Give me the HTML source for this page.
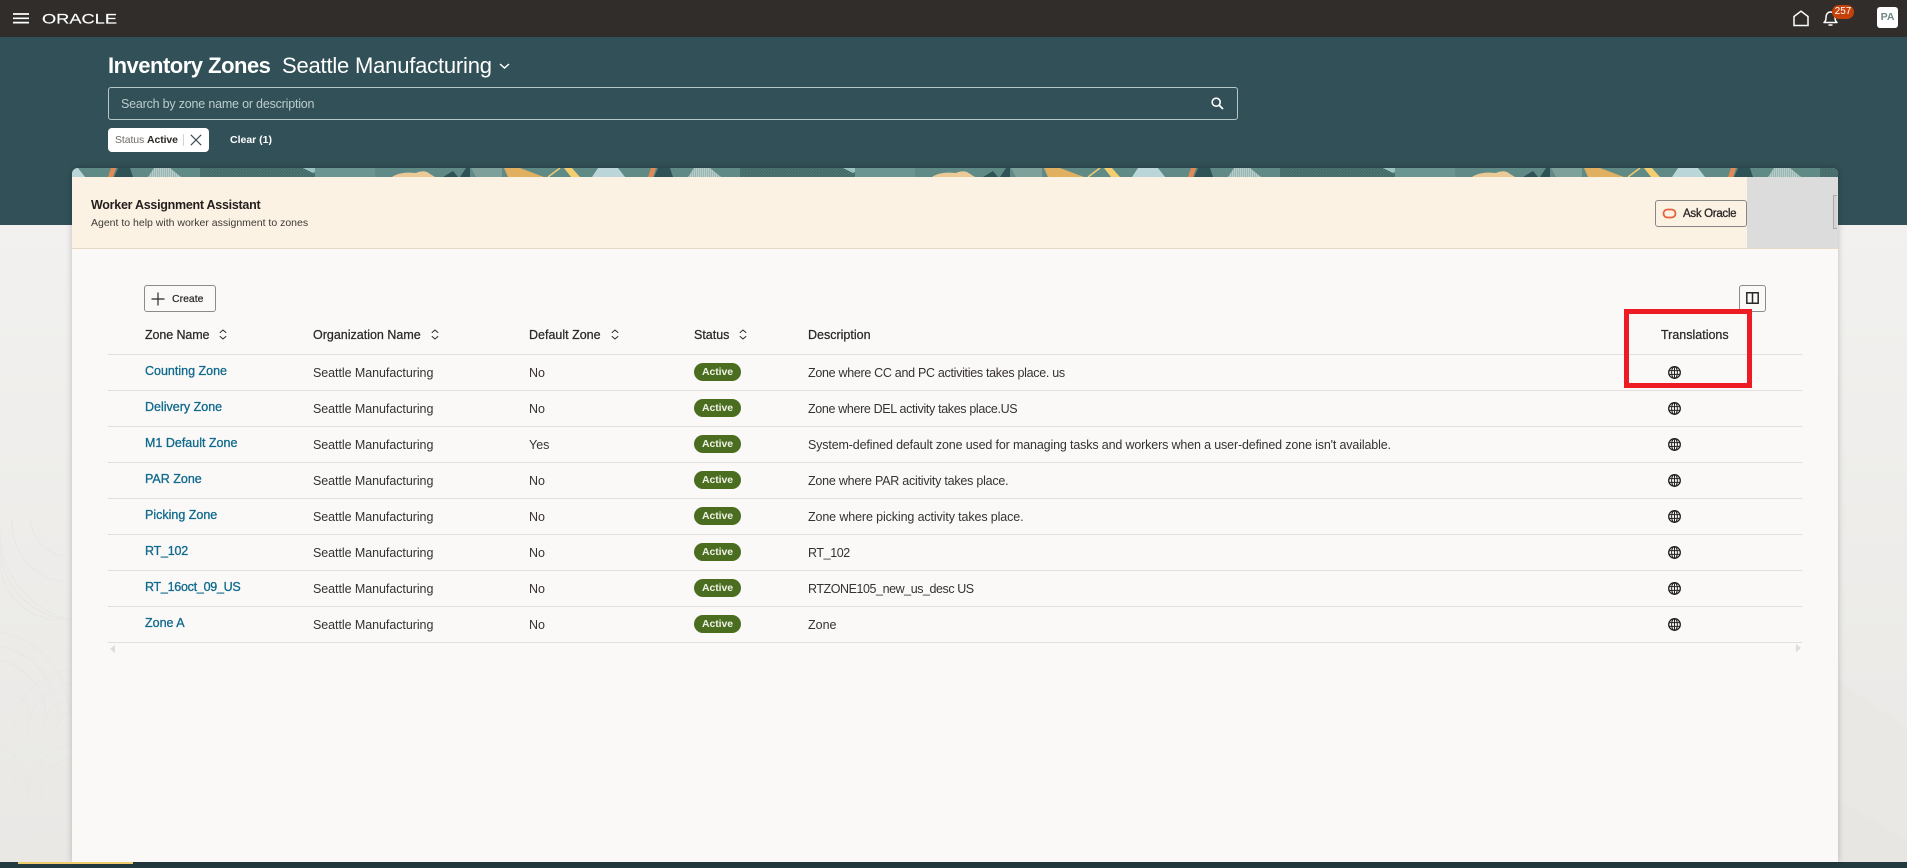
<!DOCTYPE html>
<html lang="en"><head><meta charset="utf-8"><title>Inventory Zones</title>
<style>
html,body{margin:0;padding:0;width:1907px;height:868px;overflow:hidden;background:#f1f0ee;font-family:"Liberation Sans",sans-serif;color:#2b2826}
.a{position:absolute;white-space:nowrap}
svg{position:absolute;display:block;overflow:hidden}
.h{font-size:12.5px;font-weight:400;color:#2b2826;line-height:16px;top:327px;-webkit-text-stroke:.25px #2b2826}
.l{font-size:12.5px;color:#0f6a8c;line-height:16px;-webkit-text-stroke:.3px #0f6a8c;left:145px}
.t{font-size:12.5px;color:#36322f;line-height:16px}
.o{left:313px;letter-spacing:-.06px}
.n{left:529px}
.d{left:808px}
.b{left:694px;width:47px;height:18px;border-radius:9px;background:#4a6d1f;color:#eef2e6;font-size:10.5px;font-weight:700;line-height:18px;text-align:center;letter-spacing:-.1px}
.ln{left:108px;width:1694px;height:1px;background:#e0dfdd}
.g{left:1667.5px}
</style></head><body>

<div class="a" style="left:0;top:0;width:1907px;height:37px;background:#312d2a"></div>
<div class="a" style="left:0;top:37px;width:1907px;height:188px;background:#325057"></div>
<div class="a" style="left:0;top:225px;width:1907px;height:637px;background:linear-gradient(#f2f1ef,#e9e8e5)"></div>
<div class="a" style="left:0;top:862px;width:1907px;height:6px;background:#233a40"></div>

<!-- body pattern left -->
<svg style="left:0;top:520px" width="72" height="320" viewBox="0 0 72 320" fill="none" stroke="#e8e7e4" stroke-width="1.1">
<path d="M0 40a60 60 0 0 0 60 60M0 24a76 76 0 0 0 72 76M0 10a90 90 0 0 0 72 90M12 0a60 60 0 0 0 52 62M30 0a40 40 0 0 0 36 36"/>
<path d="M0 140a60 60 0 0 1 46 58M0 126a72 72 0 0 1 58 72M0 112a86 86 0 0 1 70 86M0 170a30 30 0 0 1 30 28"/>
<path d="M72 150a62 62 0 0 0-58 62M72 164a48 48 0 0 0-44 48M72 178a34 34 0 0 0-30 34M72 192a20 20 0 0 0-16 20"/>
<path d="M0 225a50 50 0 0 1 28 50M0 238a38 38 0 0 1 16 36M72 225a50 50 0 0 0-42 60M72 238a38 38 0 0 0-30 46M72 252a24 24 0 0 0-18 30M30 292a60 60 0 0 0 42 28M14 292a72 72 0 0 0 58 24"/>
</svg>
<svg style="left:1838px;top:680px" width="69" height="182" viewBox="0 0 69 182"><path d="M0 0L69 48V182H0Z" fill="#e9e8e5"/><path d="M0 120L69 160V182H0Z" fill="#e7e6e3"/></svg>

<!-- card -->
<div class="a" style="left:72px;top:168px;width:1766px;height:694px;background:#fbf9f8;border-radius:6px 6px 0 0;box-shadow:0 0 7px rgba(0,0,0,.22)"></div>

<!-- pattern strip -->
<svg style="left:72px;top:168px" width="1766" height="9" viewBox="0 0 1766 9">
<defs>
<clipPath id="cp"><path d="M0 9V6a6 6 0 0 1 6-6H1760a6 6 0 0 1 6 6V9Z"/></clipPath>
<pattern id="st" width="2" height="2" patternUnits="userSpaceOnUse"><rect width="1" height="2" fill="#d0dedb"/></pattern>
<pattern id="fp" width="3" height="3" patternUnits="userSpaceOnUse"><path d="M0 3L3 0" stroke="#355b5b" stroke-width=".9"/></pattern>
<pattern id="tile" x="36" y="0" width="540" height="9" patternUnits="userSpaceOnUse">
<rect width="540" height="9" fill="#5f8a85"/>
<path d="M3 0H8L5 9H0Z" fill="#e38a54"/>
<path d="M10 0H22L25 9H6Z" fill="#2f5257"/>
<path d="M46 0H62L73 9H40Z" fill="#97b6b2"/><path d="M46 0H62L73 9H40Z" fill="url(#st)" opacity=".6"/>
<rect x="92" width="115" height="9" fill="#4f7672"/><rect x="92" width="115" height="9" fill="url(#fp)" opacity=".7"/>
<path d="M195 0H214L205 5Z" fill="#9cc2c3"/>
<rect x="207" width="60" height="9" fill="#6b9591"/>
<path d="M284 9C290 5 298 4 308 5C312 3 316 3 319 4L327 9Z" fill="#ecca97"/>
<path d="M335 9L345 3L350 9Z" fill="#2f5257"/>
<path d="M352 9L358 0H362V9Z" fill="#2f5257"/>
<path d="M363 0H394V9H368Z" fill="#7ea09b"/>
<path d="M396 0H412L436 9H400Z" fill="#e0b060"/>
<path d="M440 9L452 0" stroke="#f3cd6e" stroke-width="1.5"/><path d="M456 0H464L472 9H463Z" fill="#f3cd6e"/>
<path d="M490 0H510L517 9H484Z" fill="#bad6d8"/>
</pattern>
</defs>
<rect width="1766" height="9" fill="url(#tile)" clip-path="url(#cp)"/>
</svg>

<!-- banner -->
<div class="a" style="left:72px;top:177px;width:1675px;height:71px;background:#fcf2e4"></div>
<div class="a" style="left:1747px;top:177px;width:91px;height:71px;background:#dcdcdc"></div>
<div class="a" style="left:72px;top:248px;width:1766px;height:1px;background:#e8d8c8"></div>
<div class="a" style="left:1833px;top:195px;width:3px;height:32px;border:1px solid #aaa;border-right:0;background:#d4d4d4"></div>
<div class="a" style="left:91px;top:197px;font-size:12.5px;font-weight:700;line-height:16px;color:#231f1c;letter-spacing:-.27px">Worker Assignment Assistant</div>
<div class="a" style="left:91px;top:216px;font-size:10.5px;line-height:14px;color:#3c3835">Agent to help with worker assignment to zones</div>
<div class="a" style="left:1655px;top:200px;width:90px;height:25px;border:1px solid #8a8886;border-radius:3px"></div>
<svg style="left:1662px;top:208px" width="15" height="11"><rect x="1.5" y="1.5" width="12" height="8" rx="4" fill="none" stroke="#e8603c" stroke-width="1.8"/></svg>
<div class="a" style="left:1683px;top:206px;font-size:11.5px;line-height:16px;color:#2b2826;-webkit-text-stroke:.3px #2b2826;letter-spacing:-.3px">Ask Oracle</div>

<!-- top bar -->
<svg style="left:13px;top:13px" width="16" height="11"><path d="M0 1H16M0 5.3H16M0 9.6H16" stroke="#fff" stroke-width="1.7"/></svg>
<svg style="left:42px;top:12px" width="76" height="13" viewBox="0 0 76 13"><text x="0" y="11.3" font-family="Liberation Sans,sans-serif" font-size="13.5" fill="#fff" stroke="#fff" stroke-width=".15" textLength="75" lengthAdjust="spacingAndGlyphs">ORACLE</text></svg>
<svg style="left:1792px;top:10px" width="18" height="17"><path d="M2 15.5V6.5L9 1.2L16 6.5V15.5Z" fill="none" stroke="#fff" stroke-width="1.5"/></svg>
<svg style="left:1822px;top:9px" width="17" height="18"><path d="M2 13.5C3.5 12.5 4 11 4 8.5C4 5 6 3 8.5 3S13 5 13 8.5C13 11 13.5 12.5 15 13.5Z" fill="none" stroke="#fff" stroke-width="1.5" stroke-linejoin="round"/><path d="M6.5 16H10.5" stroke="#fff" stroke-width="1.5"/></svg>
<div class="a" style="left:1832px;top:5px;width:22px;height:14px;border-radius:7px;background:#c4420a;color:#fff;font-size:10px;line-height:14px;text-align:center">257</div>
<div class="a" style="left:1877px;top:7px;width:21px;height:21px;border-radius:3px;background:#fff;color:#6f8586;font-size:10.5px;font-weight:700;line-height:21px;text-align:center">PA</div>

<!-- title -->
<div class="a" style="left:108px;top:52px;font-size:22px;font-weight:700;line-height:28px;color:#fff;letter-spacing:-.5px">Inventory Zones</div>
<div class="a" style="left:282px;top:52px;font-size:22px;line-height:28px;color:#fff;letter-spacing:-.2px">Seattle Manufacturing</div>
<svg style="left:499px;top:63px" width="11" height="7"><path d="M1 1L5.5 5L10 1" fill="none" stroke="#fff" stroke-width="1.5"/></svg>

<!-- search -->
<div class="a" style="left:108px;top:87px;width:1128px;height:31px;border:1px solid #b8c8ca;border-radius:3px"></div>
<div class="a" style="left:121px;top:96px;font-size:12.5px;line-height:16px;color:#bccccd;letter-spacing:-.2px">Search by zone name or description</div>
<svg style="left:1211px;top:97px" width="13" height="13"><circle cx="5.2" cy="5.2" r="4" fill="none" stroke="#fff" stroke-width="1.6"/><path d="M8.2 8.2L12 12" stroke="#fff" stroke-width="1.8"/></svg>

<!-- chip -->
<div class="a" style="left:108px;top:128px;width:101px;height:24px;background:#fff;border-radius:4px"></div>
<div class="a" style="left:115px;top:133px;font-size:10.5px;line-height:15px;color:#6f6b67;letter-spacing:-.1px">Status <b style="color:#2b2826">Active</b></div>
<div class="a" style="left:183px;top:134px;width:1px;height:12px;background:#d5d3d0"></div>
<svg style="left:190px;top:134px" width="12" height="12"><path d="M.8 .8L11.2 11.2M11.2 .8L.8 11.2" stroke="#3f4f53" stroke-width="1.2"/></svg>
<div class="a" style="left:230px;top:133px;font-size:10.5px;font-weight:700;line-height:15px;color:#fff">Clear (1)</div>

<!-- toolbar -->
<div class="a" style="left:144px;top:285px;width:70px;height:25px;border:1px solid #8b8b8b;border-radius:3px"></div>
<svg style="left:151px;top:292px" width="14" height="14"><path d="M7 .5V13.5M.5 7H13.5" stroke="#2b2826" stroke-width="1.2"/></svg>
<div class="a" style="left:172px;top:292px;font-size:10.5px;line-height:15px;color:#2b2826;-webkit-text-stroke:.2px #2b2826">Create</div>
<div class="a" style="left:1739px;top:285px;width:25px;height:25px;border:1px solid #8b8b8b;border-radius:3px"></div>
<svg style="left:1746px;top:292px" width="13" height="12"><path d="M.8 .8H12.2V11.2H.8ZM6.5 .8V11.2" fill="none" stroke="#2b2826" stroke-width="1.5"/></svg>

<!-- headers -->
<div class="a h" style="left:145px;letter-spacing:-.1px">Zone Name</div>
<div class="a h" style="left:313px">Organization Name</div>
<div class="a h" style="left:529px">Default Zone</div>
<div class="a h" style="left:694px">Status</div>
<div class="a h" style="left:808px">Description</div>
<div class="a h" style="left:1661px">Translations</div>
<svg style="left:219px;top:329px" width="8" height="11"><path d="M.8 3.8L4 1L7.2 3.8M.8 7.2L4 10L7.2 7.2" fill="none" stroke="#2b2826" stroke-width="1"/></svg>
<svg style="left:431px;top:329px" width="8" height="11"><path d="M.8 3.8L4 1L7.2 3.8M.8 7.2L4 10L7.2 7.2" fill="none" stroke="#2b2826" stroke-width="1"/></svg>
<svg style="left:611px;top:329px" width="8" height="11"><path d="M.8 3.8L4 1L7.2 3.8M.8 7.2L4 10L7.2 7.2" fill="none" stroke="#2b2826" stroke-width="1"/></svg>
<svg style="left:739px;top:329px" width="8" height="11"><path d="M.8 3.8L4 1L7.2 3.8M.8 7.2L4 10L7.2 7.2" fill="none" stroke="#2b2826" stroke-width="1"/></svg>

<!-- lines -->
<div class="a ln" style="top:354px"></div><div class="a ln" style="top:390px"></div><div class="a ln" style="top:426px"></div><div class="a ln" style="top:462px"></div><div class="a ln" style="top:498px"></div><div class="a ln" style="top:534px"></div><div class="a ln" style="top:570px"></div><div class="a ln" style="top:606px"></div><div class="a ln" style="top:642px"></div>

<svg width="0" height="0" style="left:0;top:0"><defs><g id="gl" fill="none" stroke="#222"><circle cx="6.5" cy="6.5" r="5.8" stroke-width="1.3"/><ellipse cx="6.5" cy="6.5" rx="2.9" ry="5.8" stroke-width="1"/><path d="M6.5 .7V12.3M.9 4.6H12.1M.9 8.4H12.1" stroke-width="1"/></g></defs></svg>

<!-- row 1 -->
<div class="a l" style="top:363px">Counting Zone</div><div class="a t o" style="top:365px">Seattle Manufacturing</div><div class="a t n" style="top:365px">No</div><div class="a b" style="top:363px">Active</div><div class="a t d" style="top:365px;letter-spacing:-.3px">Zone where CC and PC activities takes place. us</div><svg class="a g" style="top:366px" width="13" height="13"><use href="#gl"/></svg>
<!-- row 2 -->
<div class="a l" style="top:399px">Delivery Zone</div><div class="a t o" style="top:401px">Seattle Manufacturing</div><div class="a t n" style="top:401px">No</div><div class="a b" style="top:399px">Active</div><div class="a t d" style="top:401px;letter-spacing:-.35px">Zone where DEL activity takes place.US</div><svg class="a g" style="top:402px" width="13" height="13"><use href="#gl"/></svg>
<!-- row 3 -->
<div class="a l" style="top:435px">M1 Default Zone</div><div class="a t o" style="top:437px">Seattle Manufacturing</div><div class="a t n" style="top:437px">Yes</div><div class="a b" style="top:435px">Active</div><div class="a t d" style="top:437px;letter-spacing:-.15px">System-defined default zone used for managing tasks and workers when a user-defined zone isn't available.</div><svg class="a g" style="top:438px" width="13" height="13"><use href="#gl"/></svg>
<!-- row 4 -->
<div class="a l" style="top:471px">PAR Zone</div><div class="a t o" style="top:473px">Seattle Manufacturing</div><div class="a t n" style="top:473px">No</div><div class="a b" style="top:471px">Active</div><div class="a t d" style="top:473px;letter-spacing:-.23px">Zone where PAR acitivity takes place.</div><svg class="a g" style="top:474px" width="13" height="13"><use href="#gl"/></svg>
<!-- row 5 -->
<div class="a l" style="top:507px">Picking Zone</div><div class="a t o" style="top:509px">Seattle Manufacturing</div><div class="a t n" style="top:509px">No</div><div class="a b" style="top:507px">Active</div><div class="a t d" style="top:509px;letter-spacing:-.12px">Zone where picking activity takes place.</div><svg class="a g" style="top:510px" width="13" height="13"><use href="#gl"/></svg>
<!-- row 6 -->
<div class="a l" style="top:543px;letter-spacing:-.2px">RT_102</div><div class="a t o" style="top:545px">Seattle Manufacturing</div><div class="a t n" style="top:545px">No</div><div class="a b" style="top:543px">Active</div><div class="a t d" style="top:545px;letter-spacing:-.4px">RT_102</div><svg class="a g" style="top:546px" width="13" height="13"><use href="#gl"/></svg>
<!-- row 7 -->
<div class="a l" style="top:579px;letter-spacing:-.26px">RT_16oct_09_US</div><div class="a t o" style="top:581px">Seattle Manufacturing</div><div class="a t n" style="top:581px">No</div><div class="a b" style="top:579px">Active</div><div class="a t d" style="top:581px;letter-spacing:-.44px">RTZONE105_new_us_desc US</div><svg class="a g" style="top:582px" width="13" height="13"><use href="#gl"/></svg>
<!-- row 8 -->
<div class="a l" style="top:615px">Zone A</div><div class="a t o" style="top:617px">Seattle Manufacturing</div><div class="a t n" style="top:617px">No</div><div class="a b" style="top:615px">Active</div><div class="a t d" style="top:617px">Zone</div><svg class="a g" style="top:618px" width="13" height="13"><use href="#gl"/></svg>

<!-- scroll arrows -->
<svg style="left:110px;top:645px" width="6" height="8"><path d="M5 0V8L0 4Z" fill="#dcdcda"/></svg>
<svg style="left:1795px;top:644px" width="6" height="8"><path d="M1 0V8L6 4Z" fill="#dcdcda"/></svg>

<!-- bottom accent -->
<div class="a" style="left:18px;top:862px;width:115px;height:2px;background:#f0cc71"></div>

<!-- red annotation -->
<div class="a" style="left:1624px;top:309px;width:118px;height:69px;border:5px solid #ed1c24"></div>
</body></html>
